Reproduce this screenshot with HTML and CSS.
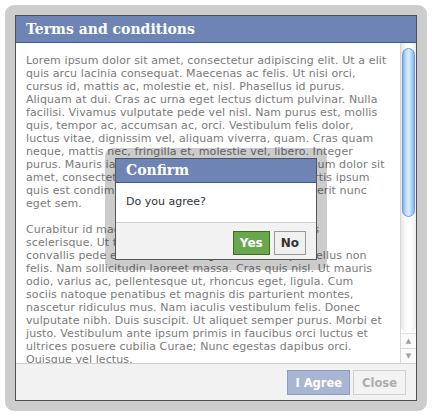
FILE: index.html
```html
<!DOCTYPE html>
<html>
<head>
<meta charset="utf-8">
<link rel="stylesheet" href="styles.css">
</head>
<body>
<div class="frame">
  <div class="dialog">
    <div class="title">Terms and conditions</div>
    <div class="body">
      <div class="content">
        <p>Lorem ipsum dolor sit amet, consectetur adipiscing elit. Ut a elit<br>
quis arcu lacinia consequat. Maecenas ac felis. Ut nisi orci,<br>
cursus id, mattis ac, molestie et, nisl. Phasellus id purus.<br>
Aliquam at dui. Cras ac urna eget lectus dictum pulvinar. Nulla<br>
facilisi. Vivamus vulputate pede vel nisl. Nam purus est, mollis<br>
quis, tempor ac, accumsan ac, orci. Vestibulum felis dolor,<br>
luctus vitae, dignissim vel, aliquam viverra, quam. Cras quam<br>
neque, mattis nec, fringilla et, molestie vel, libero. Integer<br>
purus. Mauris iaculis. Pellentesque morbi. Lorem ipsum dolor sit<br>
amet, consectetuer adipiscing elit. Nullam sed lobortis ipsum<br>
quis est condimentum. Praesent erat sed orci hendrerit nunc<br>
eget sem.</p>
        <p>Curabitur id magna. Fusce vitae mi in orci venenatis<br>
scelerisque. Ut tincidunt nisl ac elit. Proin nunc. Sed<br>
convallis pede eu nunc. Etiam dignissim, nulla phasellus non<br>
felis. Nam sollicitudin laoreet massa. Cras quis nisl. Ut mauris<br>
odio, varius ac, pellentesque ut, rhoncus eget, ligula. Cum<br>
sociis natoque penatibus et magnis dis parturient montes,<br>
nascetur ridiculus mus. Nam iaculis vestibulum felis. Donec<br>
vulputate nibh. Duis suscipit. Ut aliquet semper purus. Morbi et<br>
justo. Vestibulum ante ipsum primis in faucibus orci luctus et<br>
ultrices posuere cubilia Curae; Nunc egestas dapibus orci.<br>
Quisque vel lectus.</p>
      </div>
      <div class="scroll">
        <div class="track"><div class="thumb"></div></div>
        <div class="arrow up"><span>&#9650;</span></div>
        <div class="arrow down"><span>&#9660;</span></div>
      </div>
    </div>
    <div class="footer">
      <button class="btn agree">I Agree</button>
      <button class="btn close">Close</button>
    </div>
  </div>

  <div class="overlay">
    <div class="confirm">
      <div class="c-title">Confirm</div>
      <div class="c-body">Do you agree?</div>
      <div class="c-footer">
        <button class="btn yes">Yes</button>
        <button class="btn no">No</button>
      </div>
    </div>
  </div>
</div>
</body>
</html>
```

FILE: styles.css
```css
body {
  margin: 0;
  background: #fff;
  font-family: "DejaVu Sans", Verdana, sans-serif;
}

.frame {
  position: relative;
  margin: 5px;
  width: 402px;
  padding: 10px;
  background: #cdcdcd;
  border-radius: 9px;
}

.dialog {
  border: 1px solid #4f4f4f;
  background: #fff;
}

.title {
  height: 26px;
  line-height: 26px;
  padding-left: 10px;
  background: #6d84b4;
  border-bottom: 1px solid #3b5998;
  color: #fff;
  font-family: "DejaVu Serif", Georgia, serif;
  font-weight: bold;
  font-size: 14px;
}

.body {
  display: flex;
  height: 320px;
}

.content {
  flex: 1;
  overflow: hidden;
  padding: 11px 10px 0 10px;
  color: #7a7a7a;
  font-size: 11px;
  line-height: 13px;
  letter-spacing: 0.1px;
}

.content p {
  margin: 0 0 13px;
  white-space: nowrap;
}

.scroll {
  width: 15px;
  display: flex;
  flex-direction: column;
  border-left: 1px solid #d8d8d8;
  background: #fff;
}

.track {
  flex: 1;
  background: linear-gradient(to right, #e6e6e6, #fafafa 30%, #fff 60%, #ececec);
  border-radius: 0 0 7px 7px;
  padding-top: 5px;
}

.thumb {
  height: 167px;
  margin: 0 1px 0 1px;
  border: 1px solid #6c9be0;
  border-radius: 7px;
  background: linear-gradient(to right, #7fb0ec, #b9dbfa 25%, #d9edfd 50%, #b5d8f9 75%, #84b3ec);
}

.arrow {
  height: 14px;
  display: flex;
  align-items: center;
  justify-content: center;
  color: #a0a0a0;
  font-size: 7px;
  background: #fafafa;
}

.arrow.up {
  border-top: 1px solid #e0e0e0;
}

.arrow.down {
  border-top: 1px solid #d8d8d8;
}

.footer {
  display: flex;
  justify-content: flex-end;
  align-items: flex-start;
  gap: 3px;
  height: 30px;
  padding: 6px 10px 0;
  background: #f2f2f2;
  border-top: 1px solid #cfcfcf;
}

.btn {
  height: 25px;
  margin: 0;
  font-family: "DejaVu Sans", Verdana, sans-serif;
  font-weight: bold;
  font-size: 11.5px;
  border: 1px solid;
  cursor: default;
}

.agree {
  padding: 0 7px;
  background: #a9b5d2;
  border-color: #8a9bc6;
  color: #fff;
}

.close {
  padding: 0 8px;
  background: #f3f3f3;
  border-color: #d0d0d0;
  color: #acacac;
}

.overlay {
  position: absolute;
  left: 100px;
  top: 143px;
  padding: 10px;
  background: rgba(0, 0, 0, 0.2);
  border-radius: 8px;
}

.confirm {
  width: 200px;
  border: 1px solid #555;
  background: #fff;
}

.c-title {
  height: 23px;
  line-height: 23px;
  padding-left: 10px;
  background: #6d84b4;
  border-bottom: 1px solid #3b5998;
  color: #fff;
  font-family: "DejaVu Serif", Georgia, serif;
  font-weight: bold;
  font-size: 14px;
}

.c-body {
  height: 39px;
  box-sizing: border-box;
  padding: 12px 10px 0;
  font-size: 11px;
  line-height: 13px;
  color: #333;
}

.c-footer {
  display: flex;
  justify-content: flex-end;
  gap: 4px;
  height: 37px;
  box-sizing: border-box;
  padding: 8px 10px 0;
  background: #f2f2f2;
  border-top: 1px solid #cfcfcf;
}

.c-footer .btn {
  height: 24px;
  font-size: 12px;
  padding: 0 6px;
}

.yes {
  background: #69a74e;
  border-color: #3b6e22;
  color: #fff;
}

.no {
  background: #f0f0f0;
  border-color: #999;
  color: #333;
}
```
